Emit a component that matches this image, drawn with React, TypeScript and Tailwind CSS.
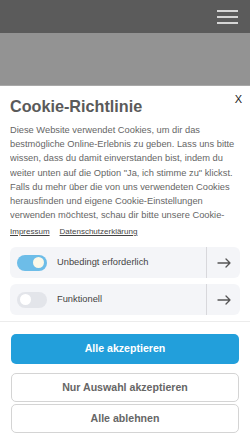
import React from "react";

function Arrow() {
  return (
    <svg width="14" height="10" viewBox="0 0 14 10" fill="none" stroke="#555" strokeWidth="1.3" strokeLinecap="round" strokeLinejoin="round">
      <path d="M1 5h12M9 1l4 4-4 4" />
    </svg>
  );
}

function Row({ on, label }: { on: boolean; label: string }) {
  return (
    <div className="flex h-[31px] items-stretch rounded-[6px] bg-[#f4f5f8]">
      <div className="flex flex-1 items-center pl-[7px]">
        {on ? (
          <div className="flex h-[16px] w-[30px] items-center justify-end rounded-full bg-[#6dbde8] pr-[3px]">
            <div className="h-[11px] w-[11px] rounded-full bg-[#fbf8e8]" />
          </div>
        ) : (
          <div className="flex h-[16px] w-[30px] items-center rounded-full bg-[#e3e5ea] pl-[3px]">
            <div className="h-[11px] w-[11px] rounded-full bg-white" />
          </div>
        )}
        <span className="ml-[10px] text-[9.3px] text-[#444]">{label}</span>
      </div>
      <div className="flex w-[34px] items-center justify-center border-l border-[#d8d8dc]">
        <Arrow />
      </div>
    </div>
  );
}

export default function App() {
  return (
    <div className="flex h-[445px] w-[250px] flex-col overflow-hidden bg-white" style={{ fontFamily: '"Liberation Sans", Arial, sans-serif' }}>
      <div className="flex h-[33px] shrink-0 items-center justify-end bg-[#5b5b5b] pr-[12px]">
        <div className="flex w-[21px] flex-col gap-[4px]">
          <div className="h-[2px] bg-[#d6d6d6]" />
          <div className="h-[2px] bg-[#d6d6d6]" />
          <div className="h-[2px] bg-[#d6d6d6]" />
        </div>
      </div>
      <div className="h-[53px] shrink-0 border-b border-[#a9a9a9] bg-[#939393]" />
      <div className="flex flex-1 flex-col bg-white">
        <div className="relative px-[10px] pt-[8px]">
          <div className="absolute right-[8px] top-[5px] text-[11px] text-[#222]">X</div>
          <h1 className="text-[16.2px] font-bold leading-[24px] text-[#5a5a5a]">Cookie-Richtlinie</h1>
          <div className="mt-[5px] h-[100px] overflow-hidden text-[9.3px] leading-[14.2px] text-[#666]">
            Diese Website verwendet Cookies, um dir das bestmögliche Online-Erlebnis zu geben. Lass uns bitte wissen, dass du damit einverstanden bist, indem du weiter unten auf die Option "Ja, ich stimme zu" klickst. Falls du mehr über die von uns verwendeten Cookies herausfinden und eigene Cookie-Einstellungen verwenden möchtest, schau dir bitte unsere Cookie-Richtlinie an.
          </div>
          <div className="mt-[4px] flex gap-[10px] text-[8px] leading-[10px] text-[#444] underline">
            <span>Impressum</span>
            <span>Datenschutzerklärung</span>
          </div>
          <div className="mt-[10px] flex flex-col gap-[6px]">
            <Row on={true} label="Unbedingt erforderlich" />
            <Row on={false} label="Funktionell" />
          </div>
        </div>
        <div className="mt-[6px] h-px bg-[#ececec]" />
        <div className="flex flex-col px-[11px] pt-[12px]">
          <div className="flex h-[30px] items-center justify-center rounded-[5px] bg-[#229fdb] text-[10.6px] font-bold text-white">
            Alle akzeptieren
          </div>
          <div className="mt-[9px] flex h-[29px] items-center justify-center rounded-[5px] border border-[#d4d4d4] text-[10.6px] font-bold text-[#666]">
            Nur Auswahl akzeptieren
          </div>
          <div className="mt-[2px] flex h-[29px] items-center justify-center rounded-[5px] border border-[#d4d4d4] text-[10.6px] font-bold text-[#666]">
            Alle ablehnen
          </div>
        </div>
      </div>
    </div>
  );
}
